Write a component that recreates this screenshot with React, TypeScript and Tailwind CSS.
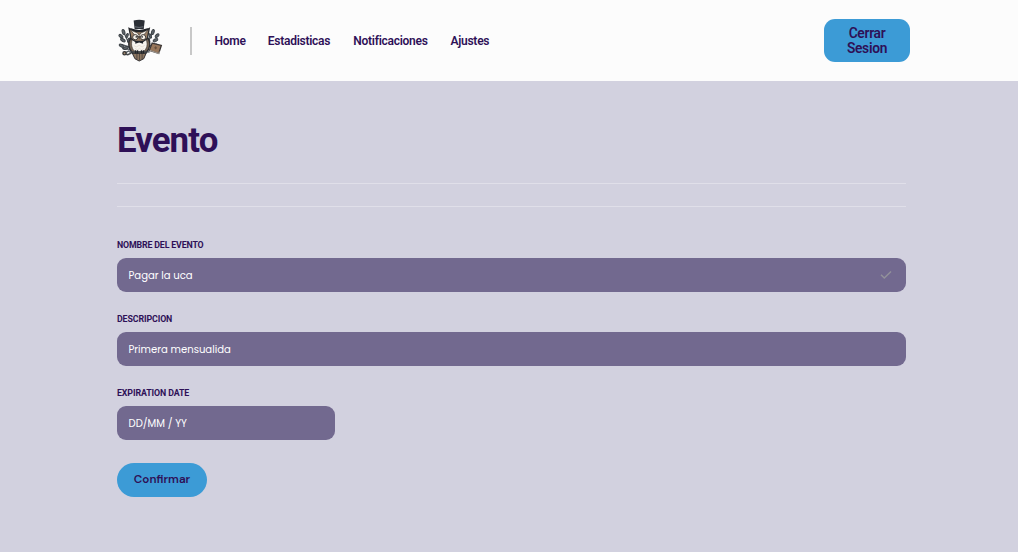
import type { ReactNode } from "react";

function OwlLogo() {
  return (
    <svg viewBox="22 20 139 131" className="h-[43.3px] w-[45.3px]" fill="none" aria-hidden="true">
      {/* branches */}
      <g stroke="#555b61" strokeWidth="4" strokeLinecap="round">
        <path d="M60 98C52 88 46 76 40 60M107 98C115 90 122 76 128 60" />
        <path d="M62 106L34 98M58 112L36 110M56 117L42 124M112 104L140 96" />
      </g>
      <g fill="#5f666b" stroke="#3b4045" strokeWidth="3">
        <ellipse cx="39" cy="59" rx="4" ry="8" transform="rotate(-15 39 59)" />
        <ellipse cx="31" cy="72" rx="4" ry="7" transform="rotate(-50 31 72)" />
        <ellipse cx="50" cy="70" rx="3" ry="7" transform="rotate(20 50 70)" />
        <ellipse cx="37" cy="84" rx="4" ry="8" transform="rotate(-60 37 84)" />
        <ellipse cx="55" cy="84" rx="3" ry="7" transform="rotate(20 55 84)" />
        <ellipse cx="33" cy="101" rx="4" ry="8" transform="rotate(-65 33 101)" />
        <ellipse cx="46" cy="108" rx="4" ry="8" transform="rotate(70 46 108)" />
        <ellipse cx="129" cy="59" rx="4" ry="8" transform="rotate(15 129 59)" />
        <ellipse cx="142" cy="70" rx="4" ry="7" transform="rotate(50 142 70)" />
        <ellipse cx="121" cy="71" rx="3" ry="7" transform="rotate(-20 121 71)" />
        <ellipse cx="137" cy="84" rx="4" ry="8" transform="rotate(62 137 84)" />
        <ellipse cx="116" cy="84" rx="3" ry="7" transform="rotate(-20 116 84)" />
      </g>
      <circle cx="42" cy="124" r="5" fill="#a48b72" stroke="#333" strokeWidth="4" />
      <path d="M46 126C54 132 61 126 67 119" stroke="#444749" strokeWidth="5" />
      {/* tail */}
      <path d="M64 120L74 141L87 148L101 141L110 120Z" fill="#8d7762" stroke="#302f31" strokeWidth="3" />
      <path d="M80 124V142M88 124V146M96 124V142" stroke="#393433" strokeWidth="2" />
      {/* wings and body */}
      <path d="M62 76C50 92 55 112 67 124L107 124C120 111 125 92 112 76Z" fill="#756454" stroke="#292b2f" strokeWidth="4" />
      <path d="M66 82C60 98 66 114 75 119H100C110 112 115 96 108 82Z" fill="#f8f4ee" stroke="#463e38" strokeWidth="2" />
      <path d="M70 100L78 105L87 100L96 105L104 100M74 109L82 114L88 109L95 114L101 109" stroke="#ded4c8" strokeWidth="2" />
      {/* head */}
      <path d="M56 48L75 58H99L118 48L112 79L99 88H75L62 79Z" fill="#9b8067" stroke="#292b2f" strokeWidth="4" />
      <path d="M60 53L82 62L87 70L92 62L114 53L100 69L87 75L74 69Z" fill="#f7f2ea" stroke="#393432" strokeWidth="2" />
      <circle cx="75" cy="75" r="8" fill="#f7f2ea" stroke="#3a3533" strokeWidth="3" />
      <circle cx="99" cy="75" r="8" fill="#f7f2ea" stroke="#3a3533" strokeWidth="3" />
      <circle cx="78" cy="74" r="2.5" fill="#292b2f" />
      <circle cx="96" cy="74" r="2.5" fill="#292b2f" />
      <path d="M83 71L87 83L91 71Z" fill="#4b443f" />
      <path d="M75 86L87 90L99 86V95L87 91L75 95Z" fill="#202329" />
      {/* hat */}
      <path d="M70 24Q87 19 104 24L101 50H73Z" fill="#2b2f36" />
      <path d="M59 47Q87 58 115 47L107 55Q87 62 67 55Z" fill="#202329" />
      <path d="M74 43Q87 47 100 43" stroke="#697078" strokeWidth="3" />
      {/* book and talons */}
      <path d="M127 93L155 100L147 125L118 115Z" fill="#98775b" stroke="#3a3533" strokeWidth="4" />
      <path d="M119 115L147 125L149 119" stroke="#dfd7cc" strokeWidth="2" />
      <path d="M138 102L142 108L137 113L133 107Z" fill="#66503d" />
      <path d="M56 120H119" stroke="#41464b" strokeWidth="4" />
      <path d="M76 115V125M82 115V125M94 115V125M100 115V125" stroke="#222529" strokeWidth="4" />
    </svg>
  );
}

function Field({ label, labelClass, value, boxClass, children }: {
  label: string;
  labelClass: string;
  value: string;
  boxClass: string;
  children?: ReactNode;
}) {
  return (
    <div className="flex h-[73.8px] flex-col">
      <span className={`h-[20px] text-[8.8px] leading-[14px] font-bold whitespace-nowrap ${labelClass}`}>{label}</span>
      <div className={`flex h-[34px] items-center justify-between rounded-[9px] bg-[#72698f] pr-[14px] pl-[11.5px] ${boxClass}`}>
        <span className="pt-px font-[Poppins,Inter,sans-serif] text-[10.1px] whitespace-nowrap text-white">{value}</span>
        {children}
      </div>
    </div>
  );
}

export default function App() {
  return (
    <div className="flex h-[552px] w-[1018px] flex-col overflow-hidden bg-[#d2d1df] font-[Roboto,sans-serif] text-[#2e1057]">
      <header className="flex h-[81.4px] shrink-0 items-center bg-[#fcfcfc] pr-[108px] pl-[117.5px]">
        <OwlLogo />
        <div className="ml-[27.2px] h-[28px] w-[2px] bg-[#c8c8c8]" />
        <nav className="ml-[22.5px] flex grow items-center text-[12px] font-semibold tracking-[-0.26px]">
          <a className="w-[53.3px]">Home</a>
          <a className="w-[85.5px]">Estadisticas</a>
          <a className="w-[97.2px]">Notificaciones</a>
          <a>Ajustes</a>
        </nav>
        <button className="h-[43px] w-[86px] rounded-[11px] bg-[#3c9bd6] text-[13.8px] leading-[15px] font-semibold tracking-[-0.3px]">
          Cerrar<br />Sesion
        </button>
      </header>
      <main className="flex flex-col pr-[112px] pl-[117px]">
        <h1 className="mt-[37.7px] h-[63.9px] text-[34.8px] leading-[42px] font-bold tracking-[-0.9px]">Evento</h1>
        <div className="h-[24px] border-y border-[#e0dfe9]" />
        <form className="mt-[31.4px] flex flex-col">
          <Field label="NOMBRE DEL EVENTO" labelClass="tracking-[-0.15px]" value="Pagar la uca" boxClass="w-full">
            <svg viewBox="0 0 12 10" className="h-[10px] w-[12px]" fill="none" stroke="#92919a" strokeWidth="1.5">
              <path d="M1 4.8L4.3 8L11 1.5" />
            </svg>
          </Field>
          <Field label="DESCRIPCION" labelClass="tracking-[-0.1px]" value="Primera mensualida" boxClass="w-full" />
          <Field label="EXPIRATION DATE" labelClass="tracking-[-0.1px]" value="DD/MM / YY" boxClass="w-[218.4px]" />
          <button type="button" className="mt-[3px] h-[34px] w-[90px] rounded-full bg-[#3c9bd6] pt-px font-['DM_Sans',Inter,sans-serif] text-[11.7px] font-semibold">
            Confirmar
          </button>
        </form>
      </main>
    </div>
  );
}
